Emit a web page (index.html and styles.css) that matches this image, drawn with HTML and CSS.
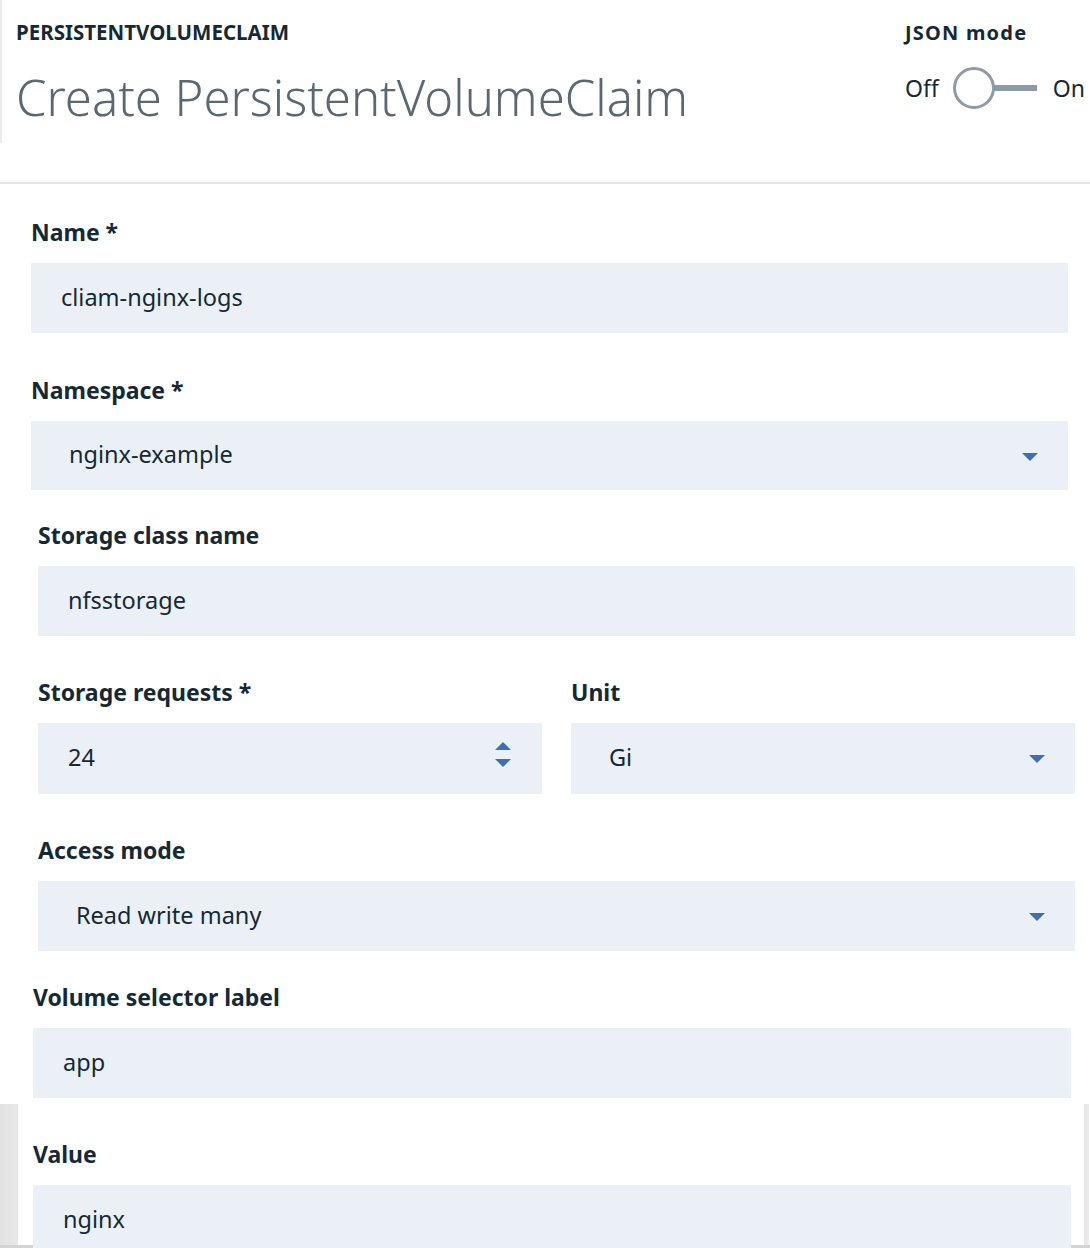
FILE: index.html
```html
<!DOCTYPE html>
<html>
<head>
<meta charset="utf-8">
<link rel="stylesheet" href="styles.css">
</head>
<body>
<div class="page">
  <header class="header">
    <div class="header-left">
      <div class="eyebrow">PERSISTENTVOLUMECLAIM</div>
      <h1 class="title">Create PersistentVolumeClaim</h1>
    </div>
    <div class="json-mode">
      <div class="json-label">JSON mode</div>
      <div class="toggle-row">
        <span class="toggle-text">Off</span>
        <svg class="toggle" width="88" height="44" viewBox="0 0 88 44">
          <rect x="38" y="19" width="46" height="6" fill="#8c9ba5"/>
          <circle cx="21" cy="22" r="19.5" fill="#fff" stroke="#8c9ba5" stroke-width="3"/>
        </svg>
        <span class="toggle-text">On</span>
      </div>
    </div>
  </header>
  <div class="divider"></div>

  <div class="field f-name">
    <div class="label">Name *</div>
    <div class="input pad-in">cliam-nginx-logs</div>
  </div>

  <div class="field f-ns">
    <div class="label">Namespace *</div>
    <div class="input pad-sel">nginx-example
      <svg class="caret" width="16" height="8" viewBox="0 0 16 8"><path d="M0 0h16L8 8z" fill="#3d70b2"/></svg>
    </div>
  </div>

  <div class="field f-sc">
    <div class="label">Storage class name</div>
    <div class="input pad-in">nfsstorage</div>
  </div>

  <div class="row f-req">
    <div class="field col">
      <div class="label">Storage requests *</div>
      <div class="input pad-in">24
        <svg class="spinner" width="16" height="26" viewBox="0 0 16 26"><path d="M0 8L8 0l8 8z" fill="#3d70b2"/><path d="M0 17h16l-8 8z" fill="#3d70b2"/></svg>
      </div>
    </div>
    <div class="field col">
      <div class="label">Unit</div>
      <div class="input pad-sel">Gi
        <svg class="caret" width="16" height="8" viewBox="0 0 16 8"><path d="M0 0h16L8 8z" fill="#3d70b2"/></svg>
      </div>
    </div>
  </div>

  <div class="field f-am">
    <div class="label">Access mode</div>
    <div class="input pad-sel">Read write many
      <svg class="caret" width="16" height="8" viewBox="0 0 16 8"><path d="M0 0h16L8 8z" fill="#3d70b2"/></svg>
    </div>
  </div>

  <div class="field f-vs">
    <div class="label">Volume selector label</div>
    <div class="input pad-in">app</div>
  </div>

  <div class="bottom">
    <div class="field f-val">
      <div class="label">Value</div>
      <div class="input pad-in">nginx</div>
    </div>
  </div>
</div>
</body>
</html>
```

FILE: styles.css
```css
html, body {
  margin: 0;
  padding: 0;
  background: #fff;
}
body {
  font-family: "Noto Sans", "Open Sans", sans-serif;
  color: #152935;
  width: 1090px;
  height: 1248px;
  overflow: hidden;
}
.page {
  display: flex;
  flex-direction: column;
}
.header {
  display: flex;
  justify-content: space-between;
  height: 182px;
}
.header-left {
  border-left: 2px solid #ececec;
  height: 143px;
  padding-left: 14px;
}
.eyebrow {
  font-weight: 700;
  font-size: 20.5px;
  line-height: 26px;
  margin-top: 19px;
}
.title {
  margin: 22px 0 0;
  font-weight: 300;
  font-size: 49px;
  line-height: 60px;
  color: #5a6872;
}
.json-mode {
  width: 185px;
  padding-top: 20px;
}
.json-label {
  font-weight: 700;
  font-size: 20px;
  line-height: 26px;
  letter-spacing: 1.2px;
}
.toggle-row {
  display: flex;
  align-items: center;
  margin-top: 20px;
}
.toggle-text {
  font-size: 23px;
  line-height: 44px;
}
.toggle {
  margin-left: 14px;
  margin-right: 12px;
}
.divider {
  height: 2px;
  background: #e0e4e8;
}
.field {
  display: flex;
  flex-direction: column;
}
.label {
  font-weight: 700;
  font-size: 23px;
  line-height: 30px;
  margin-bottom: 16px;
}
.input {
  position: relative;
  background: #ebf0f7;
  height: 70px;
  display: flex;
  align-items: center;
  font-size: 23.5px;
  box-sizing: border-box;
  padding-bottom: 3px;
}
.pad-in { padding-left: 30px; }
.pad-sel { padding-left: 38px; }
.caret {
  position: absolute;
  right: 30px;
  top: 32px;
}
.spinner {
  position: absolute;
  right: 31px;
  top: 19px;
}
.f-name { margin: 33px 22px 0 31px; }
.f-ns { margin: 42px 22px 0 31px; }
.f-ns .input { height: 69px; }
.f-sc { margin: 30px 15px 0 38px; }
.row {
  display: flex;
  gap: 29px;
  margin: 41px 15px 0 38px;
}
.col { flex: 1; }
.row .input { height: 71px; }
.f-am { margin: 41px 15px 0 38px; }
.f-vs { margin: 31px 19px 0 33px; }
.bottom {
  margin-top: 6px;
  height: 144px;
  background: linear-gradient(to right, #e2e2e2 0, #e8e8e8 18px, #fff 18px, #fff 1084px, #e6e6e6 1084px, #ececec 1089px, #fff 1089px);
  border-bottom: 3px solid #d4d4d4;
  box-sizing: border-box;
  padding-top: 35px;
}
.f-val { margin: 0 19px 0 33px; }
.f-val .input { height: 70px; }
```
